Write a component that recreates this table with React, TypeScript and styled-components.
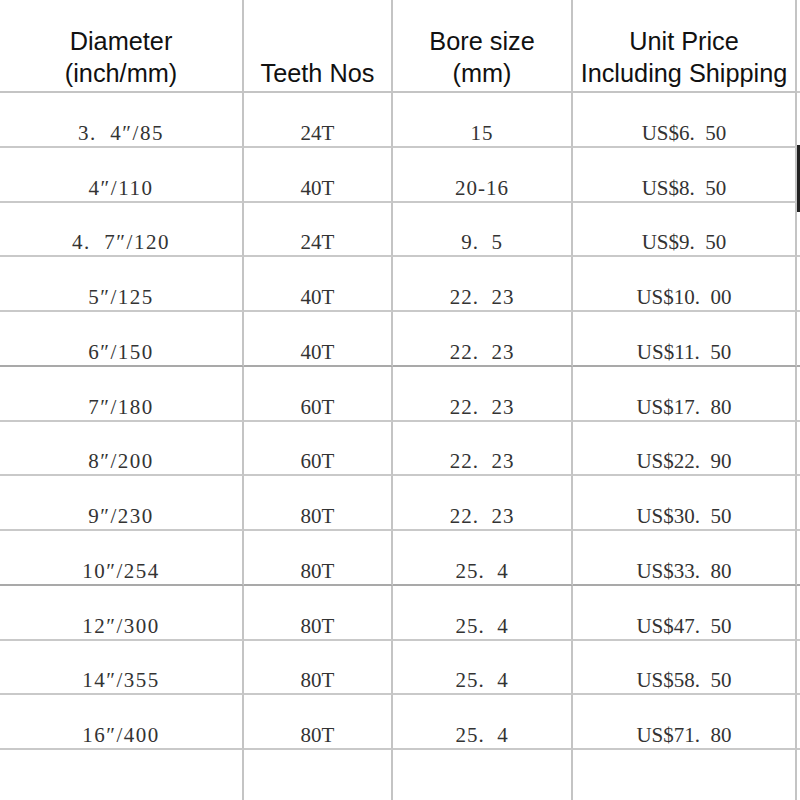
import React from "react";
import styled, { createGlobalStyle } from "styled-components";

const rows = [
    ["3.  4″/85", "24T", "15", "US$6.  50"],
    ["4″/110", "40T", "20-16", "US$8.  50"],
    ["4.  7″/120", "24T", "9.  5", "US$9.  50"],
    ["5″/125", "40T", "22.  23", "US$10.  00"],
    ["6″/150", "40T", "22.  23", "US$11.  50"],
    ["7″/180", "60T", "22.  23", "US$17.  80"],
    ["8″/200", "60T", "22.  23", "US$22.  90"],
    ["9″/230", "80T", "22.  23", "US$30.  50"],
    ["10″/254", "80T", "25.  4", "US$33.  80"],
    ["12″/300", "80T", "25.  4", "US$47.  50"],
    ["14″/355", "80T", "25.  4", "US$58.  50"],
    ["16″/400", "80T", "25.  4", "US$71.  80"],
];

// letter spacing per column so the serif digits take the sheet's wider pitch
const track = [1.5, 0, 1, 0];

// rows whose bottom rule prints a little darker in the sheet
const darker = [4, 8];

const GlobalStyle = createGlobalStyle`
    html, body {
        margin: 0;
        padding: 0;
        background: #ffffff;
    }
`;

const App = () => {
    return (
        <>
            <GlobalStyle />
            <Page>
                <Sheet>
                    <HeadCell>
                        Diameter
                        <br />
                        (inch/mm)
                    </HeadCell>
                    <HeadCell>Teeth Nos</HeadCell>
                    <HeadCell>
                        Bore size
                        <br />
                        (mm)
                    </HeadCell>
                    <HeadCell>
                        Unit Price
                        <br />
                        Including Shipping
                    </HeadCell>
                    <Edge />
                    {rows.map((row, i) => (
                        <React.Fragment key={i}>
                            {row.map((val, j) => (
                                <Cell
                                    key={j}
                                    $dark={darker.includes(i)}
                                    $track={track[j]}
                                >
                                    {val}
                                </Cell>
                            ))}
                            <Edge $dark={darker.includes(i)} />
                        </React.Fragment>
                    ))}
                    <Blank />
                    <Blank />
                    <Blank />
                    <Blank />
                    <Edge $last />
                </Sheet>
                <ScrollMark />
            </Page>
        </>
    );
};

const Page = styled.div`
    position: relative;
    width: 800px;
    height: 800px;
    overflow: hidden;
    background: #ffffff;
`;

const Sheet = styled.div`
    display: grid;
    grid-template-columns: 244px 149px 180px 224px 1fr;
    grid-template-rows: 93px repeat(12, 54.75px) 60px;
    width: 800px;
`;

const HeadCell = styled.div`
    display: flex;
    align-items: flex-end;
    justify-content: center;
    text-align: center;
    box-sizing: border-box;
    padding-bottom: 2px;
    border-right: 2px solid #c4c4c4;
    border-bottom: 2px solid #c4c4c4;
    font-family: "Liberation Sans", Arial, sans-serif;
    font-size: 25.3px;
    line-height: 32px;
    color: #111111;
`;

const Cell = styled.div<{ $dark?: boolean; $track: number }>`
    display: flex;
    align-items: flex-end;
    justify-content: center;
    box-sizing: border-box;
    padding-bottom: 1px;
    border-right: 2px solid #c4c4c4;
    border-bottom: 2px solid ${(p) => (p.$dark ? "#a9a9a9" : "#c9c9c9")};
    font-family: "Liberation Serif", "Times New Roman", serif;
    font-size: 21px;
    line-height: 24px;
    letter-spacing: ${(p) => p.$track}px;
    color: #333333;
    white-space: pre;
`;

const Blank = styled.div`
    border-right: 2px solid #c4c4c4;
`;

const Edge = styled.div<{ $dark?: boolean; $last?: boolean }>`
    box-sizing: border-box;
    border-bottom: ${(p) =>
        p.$last
            ? "none"
            : `2px solid ${p.$dark ? "#a9a9a9" : "#c9c9c9"}`};
`;

const ScrollMark = styled.div`
    position: absolute;
    right: 0;
    top: 145px;
    width: 3px;
    height: 67px;
    background: #222222;
`;

export default App;
